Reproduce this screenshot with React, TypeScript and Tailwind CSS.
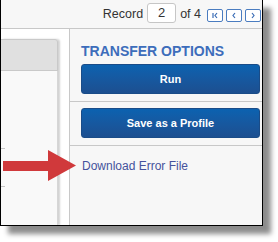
import React from "react";

const font = { fontFamily: '"Liberation Sans", Arial, sans-serif' };

function NavButton({ kind }: { kind: "first" | "prev" | "next" }) {
  return (
    <button className="w-[16px] h-[13px] rounded-[2px] border border-[#4a7cc0] bg-white flex items-center justify-center p-0">
      <svg width="14" height="11" viewBox="0 0 14 11" fill="none" stroke="#3a6cb5" strokeWidth="1.2">
        {kind === "first" && (
          <>
            <path d="M5 3v5" />
            <path d="M9 3L7 5.5L9 8" />
          </>
        )}
        {kind === "prev" && <path d="M8 3L6 5.5L8 8" />}
        {kind === "next" && <path d="M6 3L8 5.5L6 8" />}
      </svg>
    </button>
  );
}

function BlueButton({ label }: { label: string }) {
  return (
    <button className="w-[179px] h-[30px] rounded-[3px] border border-[#1a4c88] bg-gradient-to-b from-[#0b62b0] to-[#1c4f90] text-white text-[11px] font-bold">
      {label}
    </button>
  );
}

export default function App() {
  return (
    <div className="w-[278px] h-[242px] bg-white relative" style={font}>
      <div className="w-[263px] h-[226px] border-l border-r border-b border-black shadow-[8px_8px_5px_rgba(0,0,0,0.45)] flex flex-col bg-white overflow-hidden">
        {/* top bar */}
        <div className="h-[29px] shrink-0 bg-[#f7f7f7] border-b border-[#c8c8c8] flex items-center justify-end pr-[1px] text-[#333] text-[12.5px]">
          <span>Record</span>
          <div className="ml-[4px] w-[29px] h-[20px] mt-[-2px] rounded-[3px] border border-[#c6c6c6] bg-white flex items-center justify-center text-[13px]">
            2
          </div>
          <span className="ml-[4px]">of 4</span>
          <div className="ml-[6px] mt-[2px] flex gap-[3px]">
            <NavButton kind="first" />
            <NavButton kind="prev" />
            <NavButton kind="next" />
          </div>
        </div>

        <div className="flex flex-1 min-h-0">
          {/* left area */}
          <div className="w-[68px] shrink-0 pt-[10px] bg-white">
            <div className="w-[57px] h-full flex flex-col shadow-[2px_0_2px_rgba(0,0,0,0.18)] rounded-tr-[3px]">
              <div className="h-[32px] bg-[#e0e0e0] border-t border-b border-r border-[#c9c9c9] rounded-tr-[3px]" />
              <div className="flex-1 bg-[#f9f9f9] border-r border-[#d6d6d6]">
                <div className="mt-[77px] w-[4px] h-px bg-[#c4c4c4]" />
                <div className="mt-[37px] w-[4px] h-px bg-[#c4c4c4]" />
              </div>
            </div>
          </div>

          {/* right panel */}
          <div className="flex-1 border-l border-[#c8c8c8] bg-[#f7f7f7] flex flex-col">
            <div className="pl-[11px] pt-[14px]">
              <div className="text-[14px] leading-[16px] font-bold text-[#3d6dbb]">TRANSFER OPTIONS</div>
              <div className="mt-[5px]">
                <BlueButton label="Run" />
              </div>
            </div>
            <div className="mt-[7px] border-t border-[#c8c8c8]" />
            <div className="pl-[11px] pt-[6px]">
              <BlueButton label="Save as a Profile" />
            </div>
            <div className="mt-[7px] border-t border-[#c8c8c8]" />
            <div className="pl-[12px] pt-[13px] text-[12px] leading-[14px] text-[#45529c]">
              Download Error File
            </div>
          </div>
        </div>
      </div>

      {/* callout arrow */}
      <svg className="absolute left-[3px] top-[150px]" width="74" height="31" viewBox="0 0 74 31">
        <path d="M0 11H45V0L73 15.5L45 31V21H0Z" fill="#d0393b" />
      </svg>
    </div>
  );
}
